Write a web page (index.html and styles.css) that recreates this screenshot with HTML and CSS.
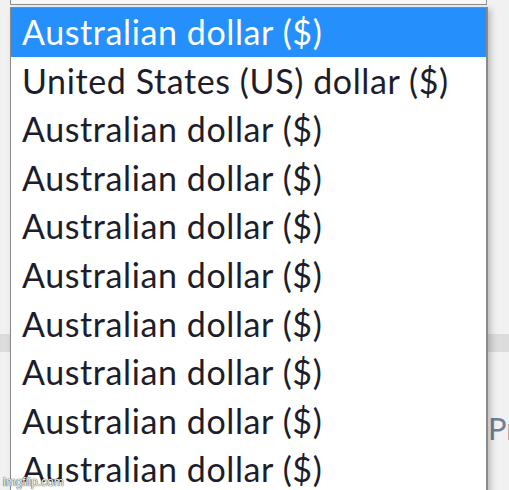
FILE: index.html
```html
<!DOCTYPE html>
<html>
<head>
<meta charset="utf-8">
<link rel="stylesheet" href="styles.css">
</head>
<body>
<div class="page">
  <div class="select-box"></div>
  <div class="band"></div>
  <div class="behind-label">Pr</div>

  <div class="dropdown">
    <div class="option selected">Australian dollar ($)</div>
    <div class="option">United States (US) dollar ($)</div>
    <div class="option">Australian dollar ($)</div>
    <div class="option">Australian dollar ($)</div>
    <div class="option">Australian dollar ($)</div>
    <div class="option">Australian dollar ($)</div>
    <div class="option">Australian dollar ($)</div>
    <div class="option">Australian dollar ($)</div>
    <div class="option">Australian dollar ($)</div>
    <div class="option">Australian dollar ($)</div>
  </div>

  <div class="watermark">imgflip.com</div>
</div>
</body>
</html>
```
FILE: styles.css
```css
html, body {
  margin: 0;
  padding: 0;
  background: #f1f1f1;
  overflow: hidden;
}

.page {
  position: relative;
  width: 509px;
  height: 490px;
  overflow: hidden;
  font-family: Lato, "Open Sans", sans-serif;
}

.select-box {
  margin-left: 10px;
  width: 477px;
  height: 5px;
  box-sizing: border-box;
  border: 1px solid #8f8f8f;
  border-top: none;
  background: #f7f7f7;
}

.band {
  margin-top: 329px;
  height: 18px;
  background: #dcdcdc;
}

.behind-label {
  margin-top: 58px;
  padding-left: 488px;
  font-size: 31px;
  line-height: 36px;
  color: #6f7f96;
}

.dropdown {
  position: absolute;
  left: 10px;
  top: 7px;
  width: 478px;
  box-sizing: border-box;
  border: 1px solid #8a8a8a;
  border-right: 2px solid #8a8a8a;
  background: #ffffff;
  box-shadow: 3px 2px 6px rgba(0, 0, 0, 0.22);
}

.option {
  height: 48.6px;
  padding-left: 11px;
  font-size: 34px;
  letter-spacing: 0.6px;
  line-height: 48.6px;
  color: #1d1d2b;
  white-space: nowrap;
}

.option.selected {
  background: #2590fb;
  color: #ffffff;
}

.watermark {
  position: absolute;
  left: 3px;
  bottom: 1px;
  font-family: "Liberation Sans", Arial, sans-serif;
  font-size: 12px;
  color: #f4f4f4;
  text-shadow: 0 0 1px #333, 0 0 1px #333;
}
```
